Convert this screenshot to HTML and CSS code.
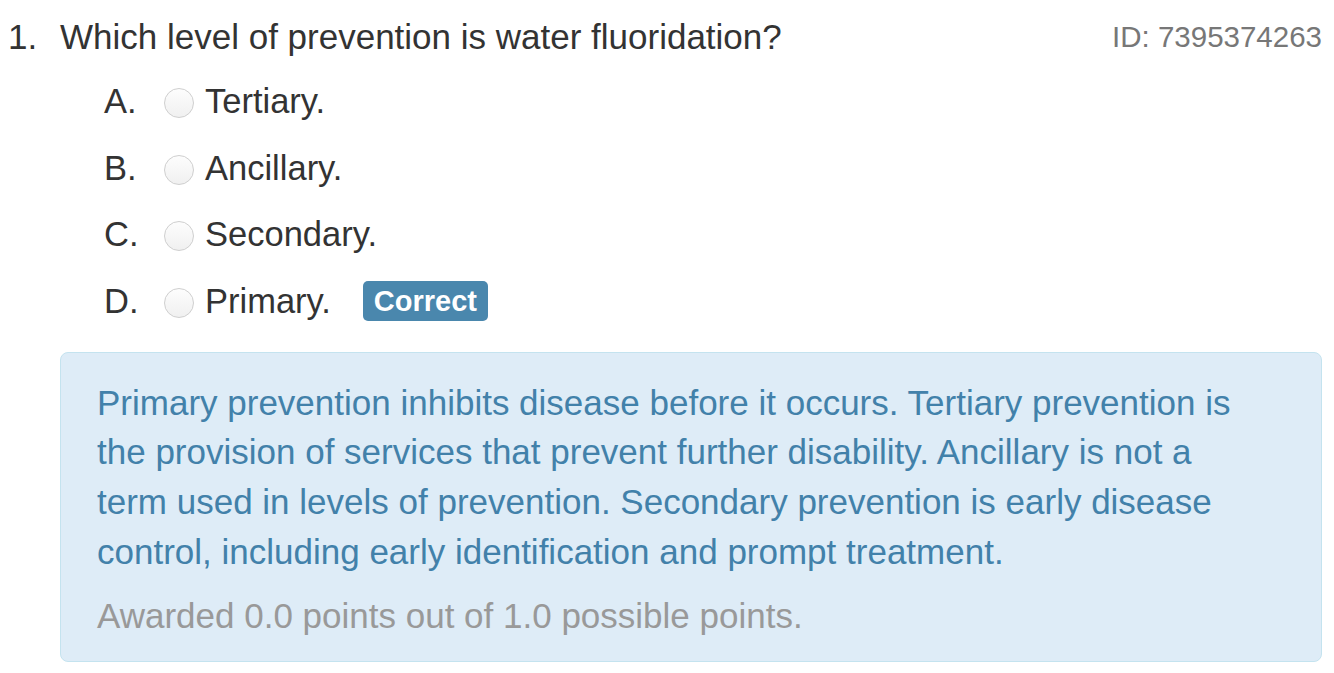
FILE: index.html
```html
<!DOCTYPE html>
<html>
<head>
<meta charset="utf-8">
<link rel="stylesheet" href="styles.css">
</head>
<body>
<div class="question">
  <div class="q-head">
    <div class="q-title"><span class="q-num">1.</span><span class="q-text">Which level of prevention is water fluoridation?</span></div>
    <div class="q-id">ID: 7395374263</div>
  </div>
  <ul class="options">
    <li class="option"><span class="letter">A.</span><span class="radio"></span><span class="label">Tertiary.</span></li>
    <li class="option"><span class="letter">B.</span><span class="radio"></span><span class="label">Ancillary.</span></li>
    <li class="option"><span class="letter">C.</span><span class="radio"></span><span class="label">Secondary.</span></li>
    <li class="option"><span class="letter">D.</span><span class="radio"></span><span class="label">Primary.</span><span class="badge">Correct</span></li>
  </ul>
  <div class="explain">
    <p class="explain-text">Primary prevention inhibits disease before it occurs. Tertiary prevention is the provision of services that prevent further disability. Ancillary is not a term used in levels of prevention. Secondary prevention is early disease control, including early identification and prompt treatment.</p>
    <p class="awarded">Awarded 0.0 points out of 1.0 possible points.</p>
  </div>
</div>
</body>
</html>
```
FILE: styles.css
```css
html, body {
  margin: 0;
  padding: 0;
  background: #ffffff;
}
body {
  font-family: "Liberation Sans", Arial, sans-serif;
  color: #333333;
}
.question {
  padding: 14px 12px 0 8px;
}
.q-head {
  display: flex;
  justify-content: space-between;
  align-items: center;
  height: 46px;
}
.q-title {
  display: flex;
  font-size: 35px;
  color: #333;
}
.q-num {
  width: 52px;
}
.q-id {
  font-size: 29.5px;
  color: #777777;
}
.options {
  list-style: none;
  margin: 8px 0 0 0;
  padding: 0 0 0 96px;
}
.option {
  display: flex;
  align-items: center;
  height: 66.7px;
  font-size: 34.5px;
}
.letter {
  width: 60px;
}
.radio {
  box-sizing: border-box;
  width: 30px;
  height: 30px;
  border: 1.5px solid #cfcfcf;
  border-radius: 50%;
  background: linear-gradient(#fdfdfd, #f0f0f0);
  margin-right: 11px;
  margin-top: 3px;
}
.badge {
  margin-left: 32px;
  background: #4a87ad;
  color: #fff;
  font-weight: bold;
  font-size: 29px;
  padding: 0 11px;
  border-radius: 5px;
  line-height: 40px;
  height: 40px;
}
.explain {
  margin: 17px 0 0 52px;
  background: #deecf7;
  border: 1.5px solid #c4e3ef;
  border-radius: 8px;
  padding: 25px 70px 22px 36px;
  height: 261px;
}
.explain-text {
  margin: 0;
  font-size: 35px;
  line-height: 49.6px;
  color: #4281aa;
}
.awarded {
  margin: 15px 0 0 0;
  font-size: 35px;
  line-height: 49.6px;
  color: #999999;
}
```
